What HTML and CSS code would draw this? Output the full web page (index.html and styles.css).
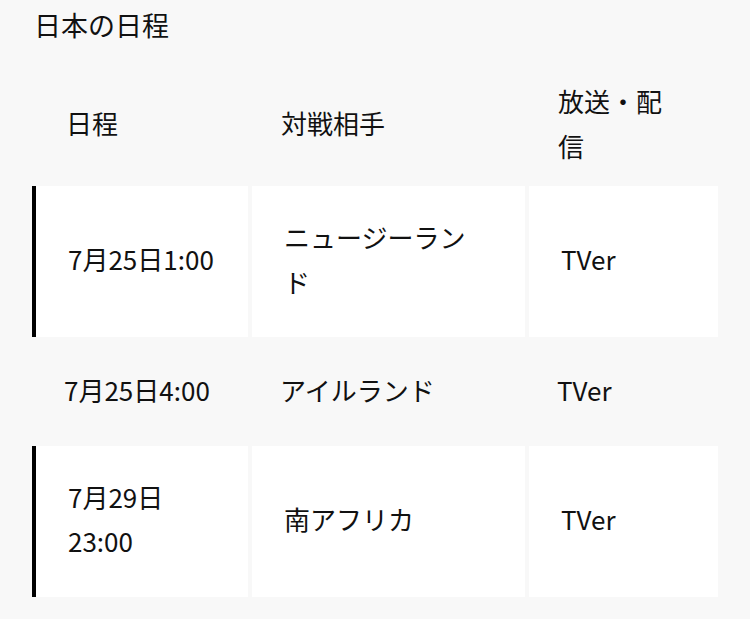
FILE: index.html
```html
<!DOCTYPE html>
<html lang="ja">
<head>
<meta charset="utf-8">
<link rel="stylesheet" href="styles.css">
</head>
<body>
<div class="page">
  <h2 class="title">日本の日程</h2>
  <table class="schedule">
    <colgroup>
      <col class="col-date">
      <col class="col-opp">
      <col class="col-tv">
    </colgroup>
    <thead>
      <tr>
        <th>日程</th>
        <th>対戦相手</th>
        <th>放送・配信</th>
      </tr>
    </thead>
    <tbody>
      <tr class="row-mark">
        <td>7月25日1:00</td>
        <td>ニュージーランド</td>
        <td>TVer</td>
      </tr>
      <tr>
        <td>7月25日4:00</td>
        <td>アイルランド</td>
        <td>TVer</td>
      </tr>
      <tr class="row-mark">
        <td>7月29日23:00</td>
        <td>南アフリカ</td>
        <td>TVer</td>
      </tr>
    </tbody>
  </table>
</div>
</body>
</html>
```

FILE: styles.css
```css
html, body {
  margin: 0;
  padding: 0;
  background: #f8f8f8;
}

body {
  font-family: "Noto Sans CJK JP", "Noto Sans", sans-serif;
  color: #111;
  font-size: 26px;
  line-height: 44.5px;
}

.page {
  padding: 0 0 0 28px;
}

.title {
  margin: 0 0 0 6px;
  padding-bottom: 1px;
  font-size: 27px;
  font-weight: 400;
  line-height: 49px;
}

.schedule {
  table-layout: fixed;
  width: 694px;
  border-collapse: separate;
  border-spacing: 4px;
}

.col-date { width: 216px; }
.col-opp { width: 273px; }
.col-tv { width: 189px; }

.schedule th {
  font-weight: 400;
  text-align: left;
  vertical-align: middle;
  padding: 25px 32px 14px 29px;
}

.schedule th:first-child { padding-left: 34px; }

.schedule td {
  text-align: left;
  vertical-align: middle;
  padding: 27px 32px 29px 28px;
}

.schedule td:first-child { padding-left: 32px; }

.row-mark td {
  background: #fff;
  padding: 29px 36px 33px 32px;
}

.row-mark td:first-child {
  border-left: 4px solid #000;
  padding-left: 32px;
  padding-right: 32px;
}
```
